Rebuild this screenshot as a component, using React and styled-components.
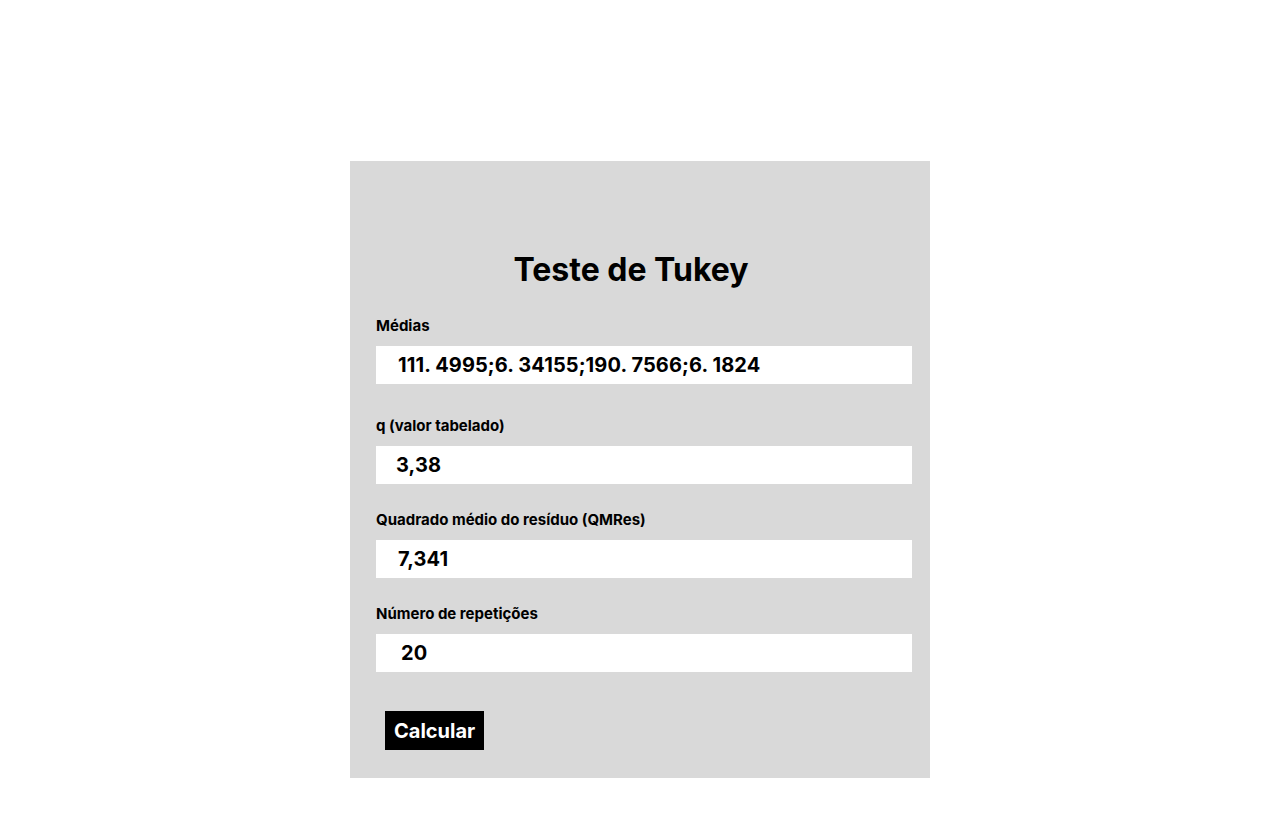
import React from 'react';
import styled, { createGlobalStyle } from 'styled-components';

const GlobalStyle = createGlobalStyle`
  * { box-sizing: border-box; }
  body {
    margin: 0;
    background: #ffffff;
    font-family: Inter, "Noto Sans", sans-serif;
    color: #000;
  }
`;

const Page = styled.main`
  display: flex;
  justify-content: center;
  padding-top: 161px;
`;

const Panel = styled.form`
  width: 580px;
  height: 617px;
  background: #d9d9d9;
  padding: 90px 18px 0 26px;
  display: flex;
  flex-direction: column;
`;

const Title = styled.h1`
  margin: 0 0 28px;
  padding-right: 26px;
  text-align: center;
  font-size: 32px;
  font-weight: 700;
  line-height: 38px;
`;

const Field = styled.div`
  display: flex;
  flex-direction: column;
  margin-bottom: ${p => p.gap}px;
`;

const Label = styled.label`
  font-size: 15px;
  font-weight: 700;
  line-height: 18px;
  margin-bottom: 11px;
`;

const Input = styled.input`
  width: 536px;
  height: 38px;
  border: none;
  outline: none;
  background: #ffffff;
  padding: 0 0 0 ${p => p.indent}px;
  font-family: Inter, "Noto Sans", sans-serif;
  font-size: 20px;
  font-weight: 700;
  letter-spacing: 0.1px;
  color: #000;
`;

const Button = styled.button`
  align-self: flex-start;
  margin: 16px 0 0 9px;
  height: 39px;
  padding: 0 9px;
  border: none;
  background: #000;
  color: #fff;
  font-family: Inter, "Noto Sans", sans-serif;
  font-size: 20px;
  font-weight: 700;
  cursor: pointer;
`;

const fields = [
  { label: 'Médias', value: '111. 4995;6. 34155;190. 7566;6. 1824', indent: 22, gap: 33 },
  { label: 'q (valor tabelado)', value: '3,38', indent: 20, gap: 27 },
  { label: 'Quadrado médio do resíduo (QMRes)', value: '7,341', indent: 22, gap: 27 },
  { label: 'Número de repetições', value: '20', indent: 25, gap: 23 },
];

export default function App() {
  return (
    <>
      <GlobalStyle />
      <Page>
        <Panel onSubmit={e => e.preventDefault()}>
          <Title>Teste de Tukey</Title>
          {fields.map((f, i) => (
            <Field key={i} gap={f.gap}>
              <Label htmlFor={`f${i}`}>{f.label}</Label>
              <Input id={`f${i}`} indent={f.indent} defaultValue={f.value} />
            </Field>
          ))}
          <Button type="submit">Calcular</Button>
        </Panel>
      </Page>
    </>
  );
}
